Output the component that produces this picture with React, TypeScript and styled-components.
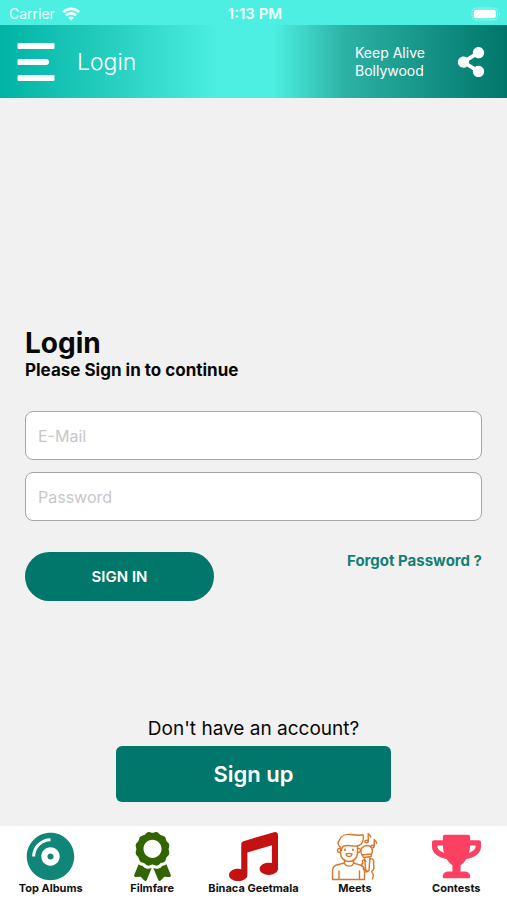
import React from 'react';
import styled, { createGlobalStyle } from 'styled-components';
import { FaAward, FaCompactDisc, FaMusic, FaShareAlt, FaTrophy } from 'react-icons/fa';

const GlobalStyle = createGlobalStyle`
  *, *::before, *::after { box-sizing: border-box; }
  body { margin: 0; background: #f1f1f1; color: #080808; font-family: Inter, 'Liberation Sans', sans-serif; }
  h1, h2, p { margin: 0; }
  button, input { font: inherit; }
  button { cursor: pointer; border: 0; padding: 0; }
`;

const Screen = styled.div`
  display: flex;
  flex-direction: column;
  min-height: 100vh;
`;

const StatusBar = styled.div`
  display: grid;
  grid-template-columns: 1fr auto 1fr;
  align-items: center;
  height: 25px;
  padding: 2px 6px 0 9px;
  background: #4cefe1;
  color: #f2fffd;
  font-size: 14px;
  line-height: 20px;
`;

const Carrier = styled.div`
  display: flex;
  align-items: center;
  gap: 7px;
`;

const Clock = styled.time`
  font-size: 15px;
  font-weight: 600;
`;

const BatteryIcon = styled.svg`
  justify-self: end;
`;

const Header = styled.header`
  display: flex;
  align-items: center;
  height: 73px;
  padding: 0 21px 0 17px;
  color: #ffffff;
  background: linear-gradient(
    90deg,
    #00b3a4 0%,
    #29d0c1 23%,
    #4cefe1 43%,
    #4cefe1 54%,
    #2cb2a5 68%,
    #00766a 100%
  );
`;

const IconButton = styled.button`
  display: flex;
  background: none;
  color: inherit;
`;

const PageTitle = styled.h2`
  flex: 1;
  margin-left: 22px;
  font-size: 23px;
  font-weight: 300;
  line-height: 32px;
`;

const Tagline = styled.p`
  width: 72px;
  margin-right: 29px;
  padding-top: 1px;
  font-size: 14px;
  line-height: 18px;
  white-space: nowrap;
`;

const Main = styled.main`
  flex: 1;
  display: flex;
  flex-direction: column;
  justify-content: flex-end;
  padding: 24px 25px;
`;

const Heading = styled.h1`
  font-size: 28px;
  font-weight: 700;
  line-height: 36px;
`;

const Subheading = styled.p`
  font-size: 17px;
  font-weight: 700;
  line-height: 18px;
`;

const Form = styled.form`
  display: flex;
  flex-direction: column;
  gap: 12px;
  margin-top: 32px;
`;

const Field = styled.input`
  width: 100%;
  height: 49px;
  padding: 0 12px;
  border: 1px solid #a6a6a6;
  border-radius: 8px;
  background: #ffffff;
  color: #111111;
  font-size: 16px;

  &::placeholder { color: #c7c7c9; opacity: 1; }
`;

const Actions = styled.div`
  display: flex;
  justify-content: space-between;
  align-items: flex-start;
  margin-top: 19px;
`;

const SignInButton = styled.button`
  width: 189px;
  height: 49px;
  border-radius: 25px;
  background: #00776a;
  color: #ffffff;
  font-size: 15px;
  font-weight: 600;
`;

const ForgotLink = styled.a`
  color: #147f72;
  font-size: 15px;
  font-weight: 700;
  line-height: 18px;
  text-decoration: none;
`;

const SignUp = styled.section`
  display: flex;
  flex-direction: column;
  align-items: center;
  gap: 4px;
  margin-top: 115px;
  font-size: 19px;
  line-height: 26px;
`;

const SignUpButton = styled.button`
  width: 60%;
  height: 56px;
  border-radius: 6px;
  background: #00776a;
  color: #ffffff;
  font-size: 22px;
  font-weight: 600;
`;

const TabBar = styled.nav`
  display: grid;
  grid-template-columns: repeat(5, 1fr);
  height: 74px;
  padding-top: 6px;
  background: #ffffff;
`;

const Tab = styled.a<{ $color: string }>`
  display: flex;
  flex-direction: column;
  align-items: center;
  color: ${({ $color }) => $color};
  text-decoration: none;

  svg { display: block; height: 49px; }
`;

const TabLabel = styled.span`
  color: #111111;
  font-size: 11px;
  font-weight: 700;
  line-height: 14px;
  white-space: nowrap;
`;

const MenuIcon = () => (
  <svg width="38" height="38" viewBox="0 0 38 38" fill="currentColor" aria-hidden="true">
    <rect x="0.5" y="0" width="37" height="6" rx="1" />
    <path d="M1.5 16H29a3 3 0 0 1 0 6H1.5a1 1 0 0 1-1-1v-4a1 1 0 0 1 1-1Z" />
    <rect x="0.5" y="32" width="37" height="6" rx="1" />
  </svg>
);

const WifiIcon = () => (
  <svg width="18" height="14" viewBox="0 0 18 14" fill="none" stroke="currentColor" strokeWidth="2.6" aria-hidden="true">
    <path d="M1 5.2a11.4 11.4 0 0 1 16 0" />
    <path d="M4 8.4a7.1 7.1 0 0 1 10 0" />
    <path d="M9 13.6 6.2 10.8a4 4 0 0 1 5.6 0Z" fill="currentColor" stroke="none" />
  </svg>
);

const Battery = () => (
  <BatteryIcon width="30" height="14" viewBox="0 0 30 14" aria-label="Battery full" role="img">
    <rect x="1" y="1" width="25.5" height="12" rx="3.8" fill="none" stroke="#8ff5eb" />
    <rect x="2.8" y="2.8" width="22" height="8.4" rx="2.2" fill="#ffffff" />
    <path d="M28 5v4a2.4 2.4 0 0 0 0-4Z" fill="#8ff5eb" />
  </BatteryIcon>
);

const SingerIcon = () => (
  <svg
    width="47"
    height="49"
    viewBox="0 0 47 49"
    fill="none"
    stroke="currentColor"
    strokeWidth="1.4"
    strokeLinecap="round"
    strokeLinejoin="round"
    aria-hidden="true"
  >
    <path d="M9 15c-2-2-2-5-.500-7C10 3.500 15 1.800 20 2.500c4 .7 8 1.200 12 .3 1.500 5-.5 10-5 11-5 1.200-10-1.300-14 .2-2 .8-2.500 2.500-2.500 4.500" />
    <path d="M9.500 15v6c0 5 4 8.500 8.500 8.500s8.500-3.500 8.500-8.500v-7" />
    <path d="M9.500 16.500c-4-1-4 4.500 0 4M26.500 16.500c4-1 4 4.500 0 4" />
    <path d="M14 17.500v.6M22 17.500v.6" strokeWidth="2" />
    <path d="M15 22c2-.8 4-.8 6 0-.4 3.300-5.600 3.300-6 0Z" />
    <path d="M13.500 28v3.500c1.500 3.500 7.500 3.500 9 0V28" />
    <path d="M13.500 31 5.500 33C2 34 1.500 37 1.500 40v7.500h32V39c0-4-1.500-5.500-5-6.200L22.500 31M8 39v8M28.500 39v8" />
    <path d="M31 23c-3-6 1-9.500 5-9.500s7 4 4.500 8.500Z" />
    <path d="m31 23 1.500 2.500 7.500-1 .5-2.500M33.500 26l1.500 14 3-1.500L39 25" />
    <path d="M35 29.500c-2-3-5-1-3 1.500-2 1-2 3.500.5 4-1 2.500 1 4 3 3.500M39 27c3-1.500 4.500 2 3.500 5 1 3 .5 6-2 7.500l1.500 2.500c1 1.800-.5 3-.5 5" />
    <ellipse cx="35.500" cy="9.500" rx="1.700" ry="1.300" />
    <path d="M37.200 9.500V1.500c.4 1.500 2.600 1.500 2.600 3.500" />
    <ellipse cx="41.500" cy="14.500" rx="1.600" ry="1.300" />
    <path d="M43.200 14.500v-7c.3 1.500 2.600 1.500 2.400 3.700" />
  </svg>
);

const tabs = [
  { label: 'Top Albums', color: '#108678', icon: <FaCompactDisc size={49} /> },
  { label: 'Filmfare', color: '#326400', icon: <FaAward size={49} /> },
  { label: 'Binaca Geetmala', color: '#c41212', icon: <FaMusic size={49} /> },
  { label: 'Meets', color: '#d9772b', icon: <SingerIcon /> },
  { label: 'Contests', color: '#fb4062', icon: <FaTrophy size={49} /> },
];

export default function App() {
  return (
    <>
      <GlobalStyle />
      <Screen>
        <StatusBar>
          <Carrier>
            Carrier
            <WifiIcon />
          </Carrier>
          <Clock>1:13 PM</Clock>
          <Battery />
        </StatusBar>
        <Header>
          <IconButton type="button" aria-label="Open menu">
            <MenuIcon />
          </IconButton>
          <PageTitle>Login</PageTitle>
          <Tagline>
            Keep Alive
            <br />
            Bollywood
          </Tagline>
          <IconButton type="button" aria-label="Share">
            <FaShareAlt size={30} />
          </IconButton>
        </Header>
        <Main>
          <Heading>Login</Heading>
          <Subheading>Please Sign in to continue</Subheading>
          <Form onSubmit={(event) => event.preventDefault()}>
            <Field type="email" aria-label="E-Mail" placeholder="E-Mail" />
            <Field type="password" aria-label="Password" placeholder="Password" />
            <Actions>
              <SignInButton type="submit">SIGN IN</SignInButton>
              <ForgotLink href="#forgot">Forgot Password ?</ForgotLink>
            </Actions>
          </Form>
          <SignUp>
            <p>Don't have an account?</p>
            <SignUpButton type="button">Sign up</SignUpButton>
          </SignUp>
        </Main>
        <TabBar>
          {tabs.map(({ label, color, icon }) => (
            <Tab key={label} href="#" $color={color}>
              {icon}
              <TabLabel>{label}</TabLabel>
            </Tab>
          ))}
        </TabBar>
      </Screen>
    </>
  );
}
